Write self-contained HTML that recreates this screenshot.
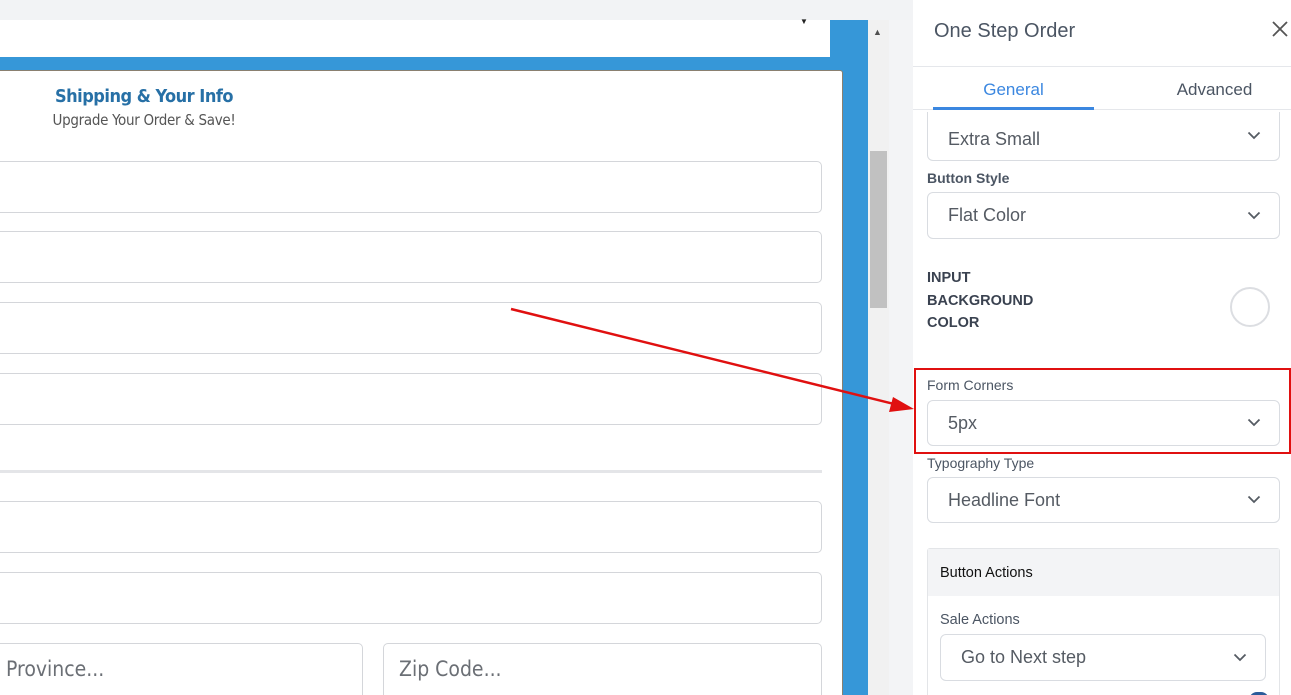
<!DOCTYPE html>
<html><head><meta charset="utf-8"><style>
*{box-sizing:border-box;margin:0;padding:0}
html,body{width:1291px;height:695px;overflow:hidden}
body{position:relative;background:#f3f4f6;font-family:"Liberation Sans",sans-serif}
.a{position:absolute}
.inp{position:absolute;border:1px solid #d4d6da;border-radius:5px;background:#fff}
.ph{position:absolute;font-size:21px;color:#6b6f75;font-family:"DejaVu Sans Condensed","Liberation Sans",sans-serif;top:13px;left:5px}
.sel{position:absolute;border:1px solid #d9dce1;border-radius:6px;background:#fff;font-size:18px;color:#555b63;padding-left:20px;display:flex;align-items:center}
.sel svg{position:absolute;right:18px;top:50%;margin-top:-5px}
.lbl{position:absolute;font-size:14px;color:#4b5563;left:927px}
</style></head><body>
<div class="a" style="left:0;top:0;width:913px;height:20px;background:#f2f3f5"></div>
<div class="a" style="left:0;top:20px;width:868px;height:675px;background:#3697d8"></div>
<div class="a" style="left:0;top:20px;width:830px;height:37px;background:#fff"></div>
<div class="a" style="left:800px;top:17px;font-size:8px;color:#222">▼</div>
<div class="a" style="left:0;top:70px;width:843px;height:625px;background:#fff;border:1px solid #8a8070;border-left:none;border-bottom:none;border-radius:0 3px 0 0"></div>
<div class="a" style="left:0;top:86px;width:288px;text-align:center;font-size:18px;font-weight:bold;color:#2770a6;font-family:'DejaVu Sans Condensed','Liberation Sans',sans-serif;letter-spacing:-0.5px">Shipping &amp; Your Info</div>
<div class="a" style="left:0;top:111px;width:288px;text-align:center;font-size:15px;color:#555;font-family:'DejaVu Sans Condensed','Liberation Sans',sans-serif;letter-spacing:-0.3px">Upgrade Your Order &amp; Save!</div>
<div class="inp" style="left:-6px;top:161px;width:828px;height:52px"></div>
<div class="inp" style="left:-6px;top:231px;width:828px;height:52px"></div>
<div class="inp" style="left:-6px;top:302px;width:828px;height:52px"></div>
<div class="inp" style="left:-6px;top:373px;width:828px;height:52px"></div>
<div class="a" style="left:0;top:470px;width:822px;height:3px;background:#e4e5e8"></div>
<div class="inp" style="left:-6px;top:501px;width:828px;height:52px"></div>
<div class="inp" style="left:-6px;top:572px;width:828px;height:52px"></div>
<div class="inp" style="left:-6px;top:643px;width:369px;height:60px"><span class="ph" style="left:11px">Province...</span></div>
<div class="inp" style="left:383px;top:643px;width:439px;height:60px"><span class="ph" style="left:15px">Zip Code...</span></div>
<div class="a" style="left:868px;top:20px;width:21px;height:675px;background:#f1f1f1"></div>
<div class="a" style="left:873px;top:27px;font-size:9px;color:#505050">▲</div>
<div class="a" style="left:870px;top:151px;width:17px;height:157px;background:#c1c1c1"></div>
<div class="a" style="left:913px;top:0;width:378px;height:695px;background:#fff"></div>
<div class="a" style="left:934px;top:20px;font-size:20px;color:#4b5563">One Step Order</div>
<svg class="a" style="left:1272px;top:21px" width="16" height="16"><path d="M1 1L15 15M15 1L1 15" stroke="#555" stroke-width="1.8"/></svg>
<div class="a" style="left:913px;top:66px;width:378px;height:1px;background:#e5e7eb"></div>
<div class="a" style="left:913px;top:109px;width:378px;height:1px;background:#e5e7eb"></div>
<div class="a" style="left:933px;top:107px;width:161px;height:3px;background:#3b87e0"></div>
<div class="a" style="left:933px;top:80px;width:161px;text-align:center;font-size:17px;color:#3b87e0">General</div>
<div class="a" style="left:1134px;top:80px;width:161px;text-align:center;font-size:17px;color:#4b5563">Advanced</div>
<svg width="0" height="0" style="position:absolute"><defs><symbol id="ch" viewBox="0 0 14 9"><path d="M1.5 1.5L7 7L12.5 1.5" fill="none" stroke="#555b63" stroke-width="1.8"/></symbol></defs></svg>
<div class="sel" style="left:927px;top:112px;width:353px;height:49px;border-top:none;border-radius:0 0 6px 6px;padding-top:6px">Extra Small<svg width="14" height="9"><use href="#ch"/></svg></div>
<div class="lbl" style="top:170px;font-weight:bold;font-size:14px">Button Style</div>
<div class="sel" style="left:927px;top:192px;width:353px;height:47px">Flat Color<svg width="14" height="9"><use href="#ch"/></svg></div>
<div class="a" style="left:927px;top:267px;font-size:14.5px;font-weight:bold;color:#3a4250;line-height:22.5px">INPUT<br>BACKGROUND<br>COLOR</div>
<div class="a" style="left:1230px;top:287px;width:40px;height:40px;border:2px solid #dcdee2;border-radius:50%"></div>
<div class="lbl" style="top:377px">Form Corners</div>
<div class="sel" style="left:927px;top:400px;width:353px;height:46px">5px<svg width="14" height="9"><use href="#ch"/></svg></div>
<div class="a" style="left:914px;top:368px;width:377px;height:86px;border:2.5px solid #e01010"></div>
<div class="lbl" style="top:455px">Typography Type</div>
<div class="sel" style="left:927px;top:477px;width:353px;height:46px">Headline Font<svg width="14" height="9"><use href="#ch"/></svg></div>
<div class="a" style="left:927px;top:548px;width:353px;height:160px;border:1px solid #e3e5e8;border-radius:3px;background:#fff"></div>
<div class="a" style="left:928px;top:549px;width:351px;height:47px;background:#f3f4f6"></div>
<div class="a" style="left:940px;top:565px;font-size:14.5px;color:#111">Button Actions</div>
<div class="a" style="left:940px;top:612px;font-size:14.5px;color:#4b5563">Sale Actions</div>
<div class="sel" style="left:940px;top:634px;width:326px;height:47px">Go to Next step<svg width="14" height="9"><use href="#ch"/></svg></div>
<div class="a" style="left:1249px;top:692px;width:20px;height:8px;border-radius:10px 10px 0 0;background:#2c5c9a"></div>
<svg class="a" style="left:0;top:0" width="1291" height="695"><line x1="511" y1="309" x2="898" y2="405" stroke="#e01010" stroke-width="2.5"/><polygon points="914,409 893,397 889,412" fill="#e01010"/></svg>
</body></html>
